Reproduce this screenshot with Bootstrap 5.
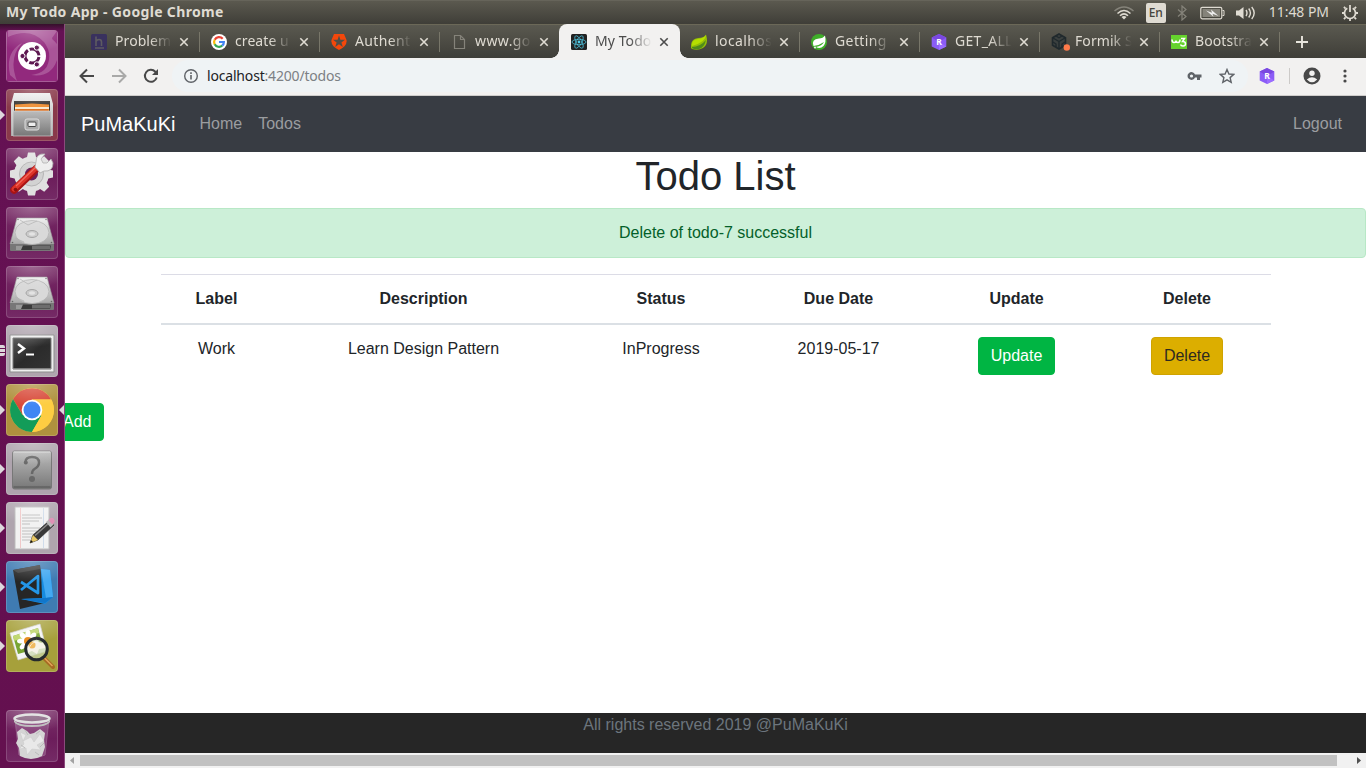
<!DOCTYPE html>
<html lang="en">
<head>
<meta charset="utf-8">
<title>My Todo App</title>
<link href="https://cdn.jsdelivr.net/npm/bootstrap@5.3.0/dist/css/bootstrap.min.css" rel="stylesheet">
<style>
  body { font-family: "Liberation Sans", Arial, sans-serif; height: 768px; overflow: hidden; color: #212529; background: #fff; }
  svg { display: block; flex: none; }
  .sys { font-family: "Noto Sans", "Open Sans", sans-serif; white-space: nowrap; }
  .panel { height: 24px; background: linear-gradient(#5b594f, #3f3e38); border-top: 1px solid #66645a; color: #dfdbd2; }
  .panel-title { font-size: 14px; font-weight: 700; padding: 0 0 2px 6px; letter-spacing: .34px; }
  .tray { padding-right: 7px; }
  .lang { width: 20px; height: 20px; background: #dfdbd2; color: #45433c; font-size: 12px; line-height: 20px; border-radius: 2px; text-align: center; font-weight: 500; }
  .clock { margin: 0 12px 0 13px; font-size: 14px; letter-spacing: -.05px; padding-bottom: 2px; }
  .launcher { width: 65px; background: linear-gradient(#35102b 0, #651154 7px, #64104f 100%); border-right: 1px solid #8b4a7c; padding: 6px 0 6px 6px; }
  .tile { width: 52px; height: 52px; border-radius: 4px; position: relative; flex: none; margin-bottom: 7px; box-shadow: inset 0 0 0 1px rgba(255,255,255,.16); }
  .tile::after { content: ""; position: absolute; inset: 0; border-radius: 4px; background: radial-gradient(ellipse 42px 22px at 50% 0, rgba(255,255,255,.28), rgba(255,255,255,0)); }
  .tile.run::before, .tile.focus i { content: ""; position: absolute; left: -6px; top: 21px; border: 5px solid transparent; border-left-color: #ddd7dc; border-right: 0; }
  .tile.focus i { left: 53px; border-left: 0; border-right: 5px solid #ddd7dc; }
  .pips { position: absolute; left: -6px; top: 20px; width: 5px; height: 11px; background: repeating-linear-gradient(#ddd7dc 0 3px, #64104f 3px 4px); border-radius: 0 2px 2px 0; }
  .purple { background: linear-gradient(#7a3069, #6c1d5b 55%, #752b66); } .silver { background: #afa4ae; }
  .tabs { height: 34px; background: linear-gradient(#5a5950, #3f3e38); border-top: 1px solid #6b6858; padding-left: 15px; color: #dfdbd2; }
  .btab { width: 120px; height: 33px; padding-left: 11px; position: relative; font-size: 14px; }
  .btab + .btab:not(.on):not(.after)::before, .plus::before { content: ""; position: absolute; left: -1px; top: 7px; width: 1px; height: 20px; background: #787669; }
  .btab .label { width: 58px; margin-left: 8px; padding-bottom: 2px; letter-spacing: .08px; overflow: hidden; -webkit-mask-image: linear-gradient(90deg, #000 60%, transparent 98%); mask-image: linear-gradient(90deg, #000 60%, transparent 98%); }
  .btab .x { margin-left: 6px; }
  .btab.on { background: #f2f1f0; color: #4c4c4c; border-radius: 8px 8px 0 0; margin-top: -1px; height: 34px; width: 121px; margin-left: -1px; padding-left: 12px; padding-top: 1px; }
  .btab.on::before, .btab.on::after { content: ""; position: absolute; bottom: 0; left: -8px; width: 8px; height: 8px; background: radial-gradient(circle at 0 0, transparent 7.5px, #f2f1f0 8px); }
  .btab.on::after { left: auto; right: -8px; background: radial-gradient(circle at 100% 0, transparent 7.5px, #f2f1f0 8px); }
  .plus { position: relative; padding-left: 16px; }
  .tools { height: 38px; background: #f2f1f0; border-bottom: 1px solid #cfcdcb; padding: 0 0 1px 14px; }
  .omni { height: 32px; width: 1076px; margin-left: 13px; background: #eff3f5; border-radius: 16px; padding: 0 13px 0 11px; font-size: 14px; color: #7c8084; }
  .omni .url { margin-left: 8px; letter-spacing: -.18px; padding-bottom: 1px; }
  .omni b { font-weight: 400; color: #202124; }
  .sep { width: 1px; height: 16px; background: #cccac8; }
  .appbar { height: 56px; background: #383c43; padding: 8px 16px; --bs-navbar-brand-margin-end: 16px; }
  .appbar .nav-link { color: #9b9da0; padding: 8px; line-height: 24px; }
  .appbar .navbar-brand { color: #fff; font-size: 20px; line-height: 30px; padding: 5px 0; }
  .page { overflow: hidden; }
  h1 { font-size: 40px; line-height: 48px; font-weight: 400; }
  .notice { height: 50px; background: #cdf0d9; border: 1px solid #b8e8c6; color: #04602a; border-radius: 4px; padding: 12px 20px; margin-bottom: 16px; }
  .todos { width: 1110px; table-layout: fixed; --bs-table-color: #212529; border-top: 1px solid #dcdce6; }
  .todos > :not(caption) > * > * { padding: 12px; border: 0; }
  .todos thead th { border-bottom: 2px solid #dbe0e5; }
  .todos .btn, .add { border-radius: 4px; height: 38px; }
  .btn.go, .btn.go:hover { background: #00b543; border-color: #00b543; color: #fff; }
  .btn.del { background: #dcae00; border-color: #cfa300; color: #2d2a20; }
  .add { margin: 0 0 0 -15px; padding-left: 12px; }
  .foot { height: 40px; background: #262626; color: #6c757d; line-height: 24px; }
  .hbar { height: 15px; background: #f1f1f1; }
  .thumb { width: 1257px; height: 11px; background: #c1c1c1; }
</style>
</head>
<body class="d-flex flex-column">
<svg width="0" height="0" class="position-absolute">
  <defs>
    <symbol id="x" viewBox="0 0 10 10"><path d="M1.300 1.300l7.400 7.400M8.700 1.300L1.300 8.700" stroke="currentColor" stroke-width="1.600"/></symbol>
    <symbol id="hexr" viewBox="0 0 16 16"><path d="M8 0l7.300 3.600v8.800L8 16 .7 12.400V3.600z" fill="#8b5cf6"/><path d="M8 0l7.300 3.600L8 8 .7 3.600z" fill="#7a48e0"/><path d="M8 16l7.300-3.600L8 8z" fill="#9b6dff"/><text x="8" y="11.300" font-size="8.500" font-weight="700" font-family="Noto Sans" text-anchor="middle" fill="#fff">R</text></symbol>
    <linearGradient id="met" x2="0" y2="1"><stop stop-color="#eee"/><stop offset="1" stop-color="#aaa"/></linearGradient>
    <linearGradient id="dk" x2="1" y2="1"><stop stop-color="#555"/><stop offset=".5" stop-color="#2b2b2b"/><stop offset="1" stop-color="#333"/></linearGradient>
    <linearGradient id="gr" x2="0" y2="1"><stop stop-color="#bcbcbc"/><stop offset="1" stop-color="#777"/></linearGradient>
    <symbol id="disk" viewBox="0 0 52 52">
      <path d="M11 11h30l7 26H4z" fill="url(#met)" stroke="#999" stroke-width=".6"/>
      <path d="M4 37h44v6q0 1-1 1H5q-1 0-1-1z" fill="#777"/><path d="M10 38.500h35l-1 4.500H10z" fill="#3b3b3b"/><path d="M10 38.500h7l-2 4.500h-5z" fill="#999"/><path d="M26 39h18v3.500H26z" fill="#888" opacity=".65"/>
      <ellipse cx="26" cy="25.500" rx="17" ry="12" fill="#d9d9d9" stroke="#b2b2b2" stroke-width=".8"/><path d="M14 13l8 5 9-4M9 31l9 4" stroke="#b2b2b2" fill="none" stroke-width=".8"/>
      <ellipse cx="26" cy="27" rx="6" ry="3.500" fill="#cbcbcb" stroke="#a5a5a5"/><ellipse cx="26" cy="27" rx="3" ry="1.700" fill="#e3e3e3"/>
      <g fill="#666"><circle cx="12" cy="12.500" r=".7"/><circle cx="40" cy="12.500" r=".7"/><circle cx="6.500" cy="35.500" r=".8"/><circle cx="45.500" cy="35.500" r=".8"/></g>
    </symbol>
  </defs>
</svg>

<header class="panel sys d-flex align-items-center">
  <div class="panel-title">My Todo App - Google Chrome</div>
  <div class="tray ms-auto d-flex align-items-center">
    <svg width="20" height="14" viewBox="0 0 20 14" fill="none" stroke="#dfdbd2" stroke-width="1.500"><path d="M.5 5Q10-3 19.500 5" stroke="#85837a"/><path d="M3.500 7.500Q10 1.500 16.500 7.500M6 9.800Q10 6 14 9.800"/><path d="M7.500 11Q10 9 12.500 11L10 13.500z" fill="#dfdbd2" stroke="none"/></svg>
    <div class="lang" style="margin-left:12px">En</div>
    <svg width="10" height="16" viewBox="0 0 10 16" style="margin-left:11px" fill="none" stroke="#85837a" stroke-width="1.200"><path d="M1 4.500l8 7L5 15V1l4 3.500-8 7"/></svg>
    <svg width="25" height="14" viewBox="0 0 25 14" style="margin-left:13px"><rect x=".8" y="1.300" width="21" height="11.500" rx="1.500" fill="none" stroke="#dfdbd2" stroke-width="1.200"/><rect x="2.500" y="3" width="17.500" height="8" fill="#85837a"/><path d="M22.500 4.500h1.500v5h-1.500" fill="none" stroke="#dfdbd2"/><path d="M6 4.500l6 2.200-1-3.200 7.500 6.500-6-2.200 1 3z" fill="#eee"/></svg>
    <svg width="20" height="16" viewBox="0 0 20 16" style="margin-left:11px"><path d="M0 5.500h3L7.500 2v12L3 10.500H0z" fill="#dfdbd2"/><path d="M10 5q2 3 0 6M12.700 3.500q3.500 4.500 0 9M15.700 2q5 6 0 12" fill="none" stroke="#dfdbd2" stroke-width="1.400"/></svg>
    <div class="clock">11:48 PM</div>
    <svg width="18" height="18" viewBox="0 0 18 18" fill="none" stroke="#dfdbd2"><path d="M6.300 4.200a5.500 5.500 0 1 0 5.400 0" stroke-width="1.700"/><path d="M9 1v7" stroke-width="1.800"/><path d="M4.600 4.600L2.900 2.900M13.400 4.600l1.700-1.700M3 9H1M15 9h2M4.600 13.400l-1.700 1.700M13.400 13.400l1.700 1.700M9 15v2" stroke-width="1.800"/></svg>
  </div>
</header>

<div class="d-flex flex-grow-1" style="min-height:0">
  <aside class="launcher d-flex flex-column flex-shrink-0">
    <div class="tile" style="background:#963f83"><svg width="52" height="52" viewBox="0 0 52 52"><path d="M1 1h50v50H1z" fill="#92297d"/><path d="M2 7Q24-3 38 12 48 25 39 40 54 27 46 8L51 1H2zM11 51Q2 28 16 13-1 22 4 45zM18 1Q44 4 44 28 42 43 25 45 45 48 51 30V14Q40 0 18 1z" fill="#e7c4df" opacity=".28"/><circle cx="26" cy="26" r="14" fill="#fff"/><circle cx="26" cy="26" r="7" fill="none" stroke="#5d1750" stroke-width="3" stroke-dasharray="12.700 2" stroke-dashoffset="-1"/><g fill="#5d1750" stroke="#fff"><circle cx="16.500" cy="26" r="2.600"/><circle cx="30.800" cy="17.600" r="2.600"/><circle cx="30.800" cy="34.400" r="2.600"/></g></svg></div>
    <div class="tile run" style="background:#89394a"><svg width="52" height="52" viewBox="0 0 52 52"><path d="M8 4h36l3 11v32H5V15z" fill="url(#met)"/><path d="M8 12h36v11H8z" fill="#383735"/><path d="M9 15.500l17-1 17 1V23H9z" fill="#ee8d31"/><path d="M9 18h34v2H9z" fill="#f8e9cf"/><path d="M10 20h32v3H10z" fill="#de7122"/><path d="M7 22h38v25H7z" fill="url(#gr)" stroke="#ddd" stroke-width=".6"/><rect x="19" y="30" width="14" height="11" rx="2" fill="#aaa" stroke="#ddd"/><rect x="22" y="33" width="8" height="4.500" rx="1" fill="#eee" stroke="#444"/></svg></div>
    <div class="tile purple"><svg width="52" height="52" viewBox="0 0 52 52"><g transform="translate(25.500 26)"><g fill="#e0e0e0"><circle r="17.500"/><g id="tt"><path d="M-3.500-21.500h7l1.500 7H-5zM-3.500 21.500h7l1.500-7H-5zM21.500-3.500v7l-7 1.500V-5zM-21.500-3.500v7l7 1.500V-5z"/></g><use href="#tt" transform="rotate(45)"/></g><circle r="12" fill="#d2d2d2" stroke="#b5b5b5"/><circle r="6.500" fill="#6a2059"/></g><path d="M31 20L8 42" stroke="#a91414" stroke-width="7.500" stroke-linecap="round"/><path d="M30 20L8 41" stroke="#dd3329" stroke-width="5" stroke-linecap="round"/><path d="M30 19L10 38" stroke="#f16a5c" stroke-width="1.200"/><circle cx="9.500" cy="41.500" r="1.800" fill="#871010"/><path d="M29 19l5 6 4-2q9 1 9-8l-2-4-4 4h-4l-2-4 4-5q-9-1-9 8z" fill="#eee" stroke="#aaa" stroke-width=".8"/></svg></div>
    <div class="tile purple"><svg width="52" height="52"><use href="#disk"/></svg></div>
    <div class="tile purple"><svg width="52" height="52"><use href="#disk"/></svg></div>
    <div class="tile silver"><span class="pips"></span><svg width="52" height="52" viewBox="0 0 52 52"><path d="M4 10h44v37H4z" fill="#eee" stroke="#8d8d8d"/><path d="M7 13h38v31H7z" fill="url(#dk)" stroke="#777"/><path d="M7 44h38" stroke="#aaa"/><path d="M12 19l6 4.500-6 4.500" fill="none" stroke="#fff" stroke-width="2.400"/><path d="M20 29.500h8" stroke="#fff" stroke-width="2"/></svg></div>
    <div class="tile run focus" style="background:#af913e"><i></i><svg width="52" height="52" viewBox="0 0 52 52"><circle cx="26" cy="26" r="22" fill="#fdcd42"/><path d="M7 15A22 22 0 0 1 45.200 15.500H26L16.500 31z" fill="#d84a3a"/><path d="M7 15A22 22 0 0 0 26 48L35.500 31.500 16.500 31z" fill="#139c59"/><path d="M45.200 15.500H26L35.500 31.500 26 48A22 22 0 0 0 45.200 15.500z" fill="#fdcd42"/><circle cx="26" cy="26" r="10.300" fill="#fff"/><circle cx="26" cy="26" r="8.500" fill="#4086f4"/></svg></div>
    <div class="tile run silver"><svg width="52" height="52" viewBox="0 0 52 52"><rect x="6.500" y="8" width="39" height="38" rx="2" fill="url(#gr)" stroke="#777"/><path d="M7.500 9h37" stroke="#ddd"/><path d="M7.500 44h37" stroke="#555"/><path d="M19.500 19q0-5 6.500-5 7 0 7 5.500 0 4-4.500 6.500-2.500 1.500-2.500 5" fill="none" stroke="#686868" stroke-width="2.400"/><circle cx="19.800" cy="19.500" r="2" fill="#686868"/><circle cx="26" cy="36" r="3" fill="#686868"/></svg></div>
    <div class="tile run silver"><svg width="52" height="52" viewBox="0 0 52 52"><path d="M9 5h34v42H9z" fill="#f2f2f2" stroke="#bbb"/><path d="M14.500 6v40" stroke="#f0c8c8"/><path d="M37.500 6v40" stroke="#d0dcea"/><path d="M16 13h18M16 16h20M16 19h17M16 22h8M16 26h18M16 29h15M16 32h14M16 35h14M16 38h8" stroke="#b4b4b4" stroke-width=".8"/><path d="M24 41l3-8 17-15 4 5-16 15z" fill="#383838" stroke="#222" stroke-width=".6"/><path d="M29 33.500L43 21" stroke="#888" stroke-width="1.500"/><path d="M24 41l3-8 5 5z" fill="#e7c765"/><path d="M24 41l1-3 2 2z" fill="#111"/><path d="M40 20l3.500-3 4.500 5-3.500 3.500z" fill="#bbb"/><path d="M42.500 18l2-2q2-1 3.500 1t0 4l-2 1.500z" fill="#df91b6"/></svg></div>
    <div class="tile run" style="background:#3f7bb2"><svg width="52" height="52" viewBox="0 0 52 52"><path d="M7 9l27-5 5 38-25 6z" fill="#262626"/><path d="M7 9l27-5v4l-22 4z" fill="#3d3d3d"/><path d="M35 8l9 1 3 27-8 7-24-5 21-1z" fill="#168be0"/><path d="M35 8l9 1 3 27-7 1z" fill="#43a9f2"/><path d="M15 38l24-1 8-1-8 6z" fill="#1276ca"/><path d="M15 21l17 11V15L15 29" fill="none" stroke="#2396e8" stroke-width="2.700" stroke-linejoin="round"/></svg></div>
    <div class="tile run" style="background:#a6a03b"><svg width="52" height="52" viewBox="0 0 52 52"><path d="M4 13l30-9 7 27-29 9z" fill="#f5f5f5" stroke="#ccc" stroke-width=".7"/><path d="M7 16l25-8 5 19-25 7z" fill="#78a533"/><path d="M7 16l25-8 1 5-25 8z" fill="#bed66d"/><g transform="translate(22 21)" fill="#fff"><g id="pet"><ellipse cy="-6" rx="2.600" ry="5"/><ellipse cy="6" rx="2.600" ry="5"/><ellipse cx="6" rx="5" ry="2.600"/><ellipse cx="-6" rx="5" ry="2.600"/></g><use href="#pet" transform="rotate(45)"/><circle r="4" fill="#e78a19"/></g><path d="M38 38l9 9" stroke="#a66a23" stroke-width="4" stroke-linecap="round"/><path d="M38.500 38l8 8" stroke="#e2a85a" stroke-width="1.500"/><circle cx="30.500" cy="29" r="11" fill="#c9d9ac" opacity=".7"/><path d="M21 25l7-4 9 2 3 5-7 1-2 5-5-3-5 2z" fill="#f5f3e8"/><circle cx="26" cy="25" r="3.500" fill="#edab3c" opacity=".8"/><circle cx="30.500" cy="29" r="10.800" fill="none" stroke="#252a2d" stroke-width="3"/><path d="M23 28q3-7 9-6" stroke="#fff" fill="none" opacity=".7"/></svg></div>
    <div class="tile purple mt-auto mb-0"><svg width="52" height="52" viewBox="0 0 52 52"><path d="M9 9h34l-4 36q-13 6-26 0z" fill="#a06898" opacity=".5" stroke="#b796b1"/><path d="M11 22l5-4 5 3 3 3 4-1 6-4 5 4-1 7 1 7-3 9q-11 6-22 0l-1-8-3-5 2-4z" fill="#d5d5d5"/><path d="M14 22l6 3-3 6 8-4 3 5 6-8 4 7-7 4 4 5-9-1-5 6-1-7-7 1 5-5z" fill="#e9e9e9" stroke="#c8c8c8" stroke-width=".5"/><path d="M19 20l3 5M30 24l4-3M15 35l4 3M34 37l4-4M29 42l4 3" stroke="#bbb"/><ellipse cx="26" cy="8.500" rx="17.500" ry="4" fill="#85607e" stroke="#ddd" stroke-width="2.500"/><path d="M8 9q2 6 18 6t18-6v3q-3 5-18 5T8 12z" fill="#bbb"/></svg></div>
  </aside>

  <section class="d-flex flex-column flex-grow-1" style="min-width:0">
    <div class="tabs sys d-flex">
      <div class="btab d-flex align-items-center"><svg width="16" height="16"><rect width="16" height="16" rx="1.500" fill="#39315e"/><path d="M5 2.500V12M5 7.500q1-2 3-2 2.500 0 2.500 2.500v4M4 14h9" fill="none" stroke="#5d5b61" stroke-width="1.600"/></svg><span class="label">Problem</span><svg class="x" width="10" height="10"><use href="#x"/></svg></div>
      <div class="btab d-flex align-items-center"><svg width="16" height="16" viewBox="0 0 16 16"><circle cx="8" cy="8" r="8" fill="#fff"/><g fill="none" stroke-width="2.200"><path d="M11.700 4.800A4.900 4.900 0 0 0 3.700 5.800" stroke="#ea4335"/><path d="M3.700 5.700a4.900 4.900 0 0 0 0 4.700" stroke="#fbbc05"/><path d="M3.700 10.200a4.900 4.900 0 0 0 7.500 1.500" stroke="#34a853"/><path d="M11.200 11.700A4.900 4.900 0 0 0 12.900 8H8" stroke="#4285f4"/></g></svg><span class="label">create u</span><svg class="x" width="10" height="10"><use href="#x"/></svg></div>
      <div class="btab d-flex align-items-center"><svg width="16" height="16" viewBox="0 0 16 16"><path d="M3 0h10l2.500 6Q16.500 12 8 16-.5 12 .5 6z" fill="#f4470b"/><path d="M8 1.500l1.400 4.300h4.600l-3.600 2.700 1.400 4.500L8 10.300 4.200 13l1.400-4.500L2 5.800h4.600z" fill="#504f47"/></svg><span class="label" style="letter-spacing:.35px">Authent</span><svg class="x" width="10" height="10"><use href="#x"/></svg></div>
      <div class="btab d-flex align-items-center"><svg width="16" height="16" fill="none" stroke="#85837a" stroke-width="1.200"><path d="M3.500 1.500h6l4 4v9h-10zM9.500 1.500v4h4"/></svg><span class="label" style="letter-spacing:.4px">www.go</span><svg class="x" width="10" height="10"><use href="#x"/></svg></div>
      <div class="btab on d-flex align-items-center"><svg width="16" height="16" viewBox="0 0 16 16"><rect width="16" height="16" rx="1.500" fill="#222"/><g fill="none" stroke="#50cce8" stroke-width=".7"><ellipse cx="8" cy="8" rx="7" ry="2.700"/><ellipse cx="8" cy="8" rx="7" ry="2.700" transform="rotate(60 8 8)"/><ellipse cx="8" cy="8" rx="7" ry="2.700" transform="rotate(120 8 8)"/></g><circle cx="8" cy="8" r="1.400" fill="#50cce8"/></svg><span class="label">My Todo</span><svg class="x" width="10" height="10"><use href="#x"/></svg></div>
      <div class="btab after d-flex align-items-center"><svg width="16" height="16" viewBox="0 0 16 16"><path d="M0 14Q-1 5 7 4q6 0 8-3.500Q18 10 12 14q-5 3-11 1z" fill="#94bd08"/><path d="M1 13q8 0 14-7-2 8-7 9-4 1-7-1z" fill="#4f8b1b"/><path d="M1 12Q0 6 7 5q6-1 8-4 0 7-14 11z" fill="#b6df00"/></svg><span class="label" style="letter-spacing:.4px">localhos</span><svg class="x" width="10" height="10"><use href="#x"/></svg></div>
      <div class="btab d-flex align-items-center"><svg width="16" height="16" viewBox="0 0 16 16"><circle cx="8" cy="8" r="8" fill="#3fae29"/><path d="M2.500 12Q0 5 8 4.500q4 0 6-3 1.500 7-1.500 10.500Q9 15.500 5 13q6-1 8-5-4 3-10.500 4z" fill="#fff"/><circle cx="4" cy="13.500" r=".9" fill="#fff"/></svg><span class="label" style="letter-spacing:.4px">Getting</span><svg class="x" width="10" height="10"><use href="#x"/></svg></div>
      <div class="btab d-flex align-items-center"><svg width="16" height="16"><use href="#hexr"/></svg><span class="label" style="letter-spacing:.3px">GET_ALL</span><svg class="x" width="10" height="10"><use href="#x"/></svg></div>
      <div class="btab d-flex align-items-center"><svg width="20" height="18" viewBox="0 0 20 18" style="margin-right:-4px"><path d="M8 1l6.500 3.700v7.500L8 16l-6.500-3.800V4.700z" fill="#3b403f" stroke="#20292d" stroke-width="1.600"/><path d="M2 5l6 3.500L14 5M8 8.500V16M5 3l3 1.800L11 3M2 9l3 2v3M14 9l-3 2v3" fill="none" stroke="#20292d" stroke-width="1.400"/><circle cx="15.800" cy="14.500" r="3.200" fill="#ff7a4a"/></svg><span class="label">Formik S</span><svg class="x" width="10" height="10"><use href="#x"/></svg></div>
      <div class="btab d-flex align-items-center"><svg width="16" height="16" viewBox="0 0 16 16"><path d="M0 1h16v14H0z" fill="#65d32d"/><path d="M1 5.500q0 3 2 3t2-2q0 2 2 2t2-3M10 4.500h3.500L11.500 7.500q3 0 3 2.200T12 12q-2 0-2.500-1.500" fill="none" stroke="#fff" stroke-width="1.500"/></svg><span class="label">Bootstra</span><svg class="x" width="10" height="10"><use href="#x"/></svg></div>
      <div class="plus d-flex align-items-center"><svg width="12" height="12"><path d="M6 0v12M0 6h12" stroke="#e8e5dd" stroke-width="1.900"/></svg></div>
    </div>

    <div class="tools sys d-flex align-items-center">
      <svg width="16" height="16" fill="none" stroke="#484848" stroke-width="2"><path d="M15 8H2M8 1.500L1.500 8 8 14.500"/></svg>
      <svg width="16" height="16" fill="none" stroke="#a9a9a8" stroke-width="2" style="margin-left:16px"><path d="M1 8h13M8 1.500L14.500 8 8 14.500"/></svg>
      <svg width="16" height="16" style="margin-left:16px"><path d="M13.700 9.500A6 6 0 1 1 12.300 3.700L14 5.500" fill="none" stroke="#484848" stroke-width="2"/><path d="M15 1v6H9z" fill="#484848"/></svg>
      <div class="omni d-flex align-items-center">
        <svg width="16" height="16" fill="none" stroke="#5f6368"><circle cx="8" cy="8" r="6.300" stroke-width="1.400"/><path d="M8 7v4.500M8 4.300V6" stroke-width="1.600"/></svg>
        <span class="url"><b>localhost</b>:4200/todos</span>
        <svg width="16" height="12" viewBox="0 0 16 12" class="ms-auto"><path fill-rule="evenodd" d="M8 4.500h6.500v3H13V10h-3V7.500H8A3.900 3.900 0 1 1 8 4.500zM4.500 4.400a1.600 1.600 0 1 0 0 3.200 1.600 1.600 0 0 0 0-3.200z" fill="#5f6368"/></svg>
        <svg width="16" height="16" viewBox="0 0 16 16" style="margin-left:16px"><path d="M8 1.500l1.900 4.500 4.900.4-3.700 3.200 1.100 4.800L8 11.900l-4.200 2.500 1.100-4.800L1.200 6.400 6.100 6z" fill="none" stroke="#5f6368" stroke-width="1.400"/></svg>
      </div>
      <svg width="16" height="16" style="margin-left:11px"><use href="#hexr"/></svg>
      <span class="sep" style="margin:0 13px 0 14px"></span>
      <svg width="18" height="18" viewBox="0 0 18 18"><circle cx="9" cy="9" r="8.500" fill="#484848"/><circle cx="9" cy="6.300" r="2.700" fill="#f2f1f0"/><path d="M3.800 12.500q5.200-4.500 10.400 0-5.200 5.500-10.400 0z" fill="#f2f1f0"/></svg>
      <svg width="4" height="14" style="margin-left:22px" fill="#484848"><circle cx="2" cy="2" r="1.600"/><circle cx="2" cy="7" r="1.600"/><circle cx="2" cy="12" r="1.600"/></svg>
    </div>

    <nav class="navbar navbar-expand appbar flex-shrink-0">
      <a class="navbar-brand" href="#">PuMaKuKi</a>
      <ul class="navbar-nav">
        <li class="nav-item"><a class="nav-link" href="#">Home</a></li>
        <li class="nav-item"><a class="nav-link" href="#">Todos</a></li>
      </ul>
      <ul class="navbar-nav ms-auto">
        <li class="nav-item"><a class="nav-link" href="#">Logout</a></li>
      </ul>
    </nav>

    <main class="page flex-grow-1">
      <h1 class="text-center mb-2">Todo List</h1>
      <div class="notice text-center">Delete of todo-7 successful</div>
      <table class="table todos text-center mx-auto mb-3">
        <colgroup><col style="width:112px"><col style="width:302px"><col style="width:173px"><col style="width:182px"><col style="width:174px"><col style="width:167px"></colgroup>
        <thead><tr><th>Label</th><th>Description</th><th>Status</th><th>Due Date</th><th>Update</th><th>Delete</th></tr></thead>
        <tbody><tr><td>Work</td><td>Learn Design Pattern</td><td>InProgress</td><td>2019-05-17</td><td><button class="btn go">Update</button></td><td><button class="btn del">Delete</button></td></tr></tbody>
      </table>
      <button class="btn go add">Add</button>
    </main>

    <footer class="foot text-center flex-shrink-0">All rights reserved 2019 @PuMaKuKi</footer>
    <div class="hbar d-flex align-items-center flex-shrink-0">
      <svg width="15" height="15"><path d="M9 4v7L5 7.500z" fill="#a3a3a3"/></svg>
      <div class="thumb"></div>
      <svg width="15" height="15" class="ms-auto"><path d="M6 4v7l4-3.500z" fill="#505050"/></svg>
    </div>
  </section>
</div>
<script src="https://cdn.jsdelivr.net/npm/bootstrap@5.3.0/dist/js/bootstrap.bundle.min.js"></script>
</body>
</html>
